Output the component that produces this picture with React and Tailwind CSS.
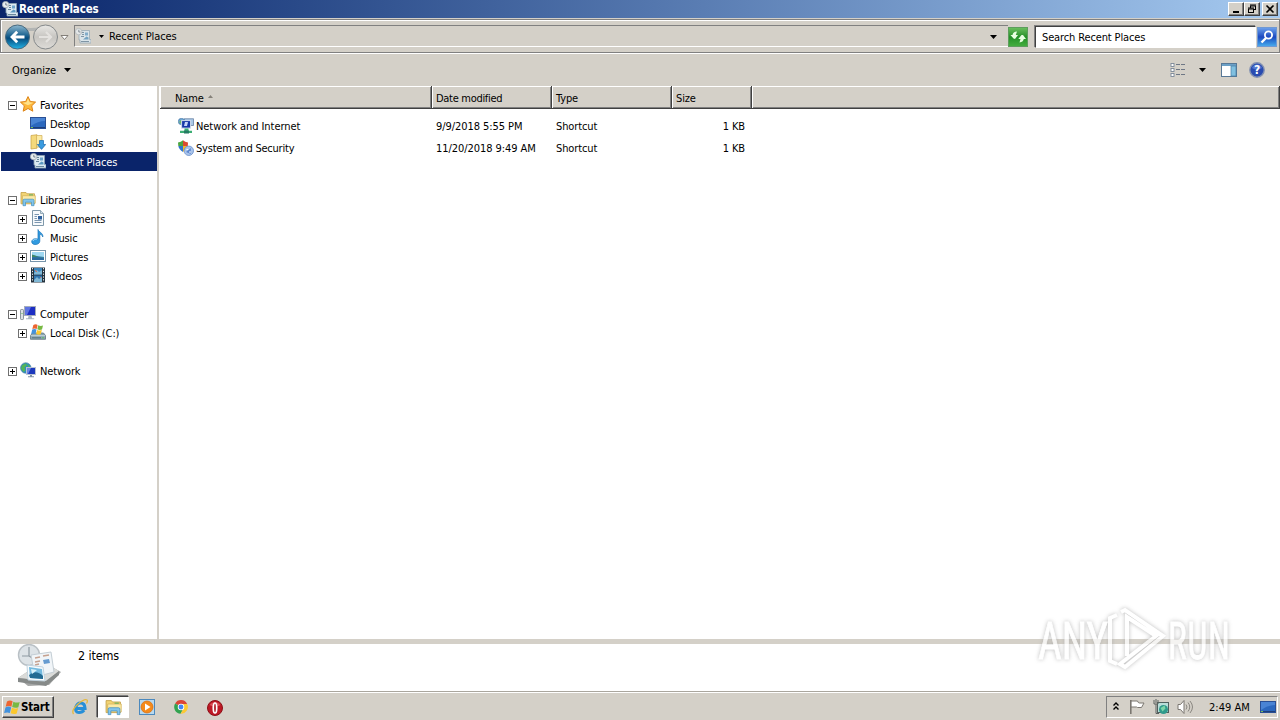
import React from 'react';

const Svg = ({ size = 16, className = '', children, box = '0 0 16 16' }) => (
    <svg width={size} height={size} viewBox={box} className={`shrink-0 ${className}`}>{children}</svg>
);

const RecentIcon = ({ size = 16, className }) => (
    <Svg size={size} className={className}>
        <path d="M4 2.5h10.5v9H16v3.500H5v-3H4z" fill="#dce9f2" stroke="#8da2b1" strokeWidth=".8" />
        <path d="M7 4.500h2M7 6.500h2M6 8.500h3M6 13.500h8" stroke="#6a879d" />
        <rect x="10" y="4.500" width="3" height="3" fill="#6ea5cb" />
        <path d="M8 11.500h5.500v-2l-2-1z" fill="#5c98c0" />
        <circle cx="3.600" cy="3.600" r="3.200" fill="#e8edf0" stroke="#a9b2b8" strokeWidth=".8" />
        <path d="M3.800 1.800v2.200h1.700" fill="none" stroke="#5b6b78" strokeWidth=".8" />
    </Svg>
);

const StarIcon = () => (
    <Svg>
        <path d="M8 .6l2.3 4.9 5.3.6-3.9 3.7 1.1 5.4L8 12.5l-4.8 2.7 1.1-5.4L.4 6.1l5.3-.6z" fill="#fdb73a" stroke="#dd8418" />
        <path d="M8 2.5l1.6 3.8 3.8.5-5.4 2.4-5.4-2.4 3.9-.5z" fill="#ffe28b" />
    </Svg>
);

const DesktopIcon = () => (
    <Svg>
        <rect x=".5" y="2.5" width="15" height="11" fill="#2c68be" stroke="#2a4f94" />
        <path d="M1 3h14v3Q8 6 1 11z" fill="#4a84d4" />
        <path d="M1 12.5h14" stroke="#1f3e78" />
        <path d="M1 12.5h2" stroke="#78c159" />
    </Svg>
);

const DownloadsIcon = () => (
    <Svg>
        <path d="M1 1.5l6-.8v13.5L1 15z" fill="#f5d97c" stroke="#c8a141" strokeWidth=".7" />
        <path d="M6.5 1.5h5.5V13H6.5z" fill="#fbeaa4" stroke="#d1ae55" strokeWidth=".7" />
        <path d="M9.5 6.5h4v4h2.2L11.5 15.4 7.3 10.5h2.2z" fill="#399be0" stroke="#1867ad" strokeWidth=".7" />
    </Svg>
);

const FolderIcon = ({ size = 16, className }) => (
    <Svg size={size} className={className}>
        <path d="M1 1.5h5l1 1.3h7.5v10H1z" fill="#f2d474" stroke="#c39f48" strokeWidth=".8" />
        <path d="M2.5 4.7h12.8v7.5H2.5z" fill="#fbeaa6" stroke="#d2b058" strokeWidth=".7" />
        <path d="M9 3.9h4" stroke="#5caf60" />
        <path d="M3 14.7V9.5q0-1.300 1.300-1.300h8.400q1.300 0 1.300 1.300v5.200h-2.500v-3.500h-6v3.500z" fill="#82c5ec" stroke="#438fc0" strokeWidth=".7" />
    </Svg>
);

const DocumentIcon = () => (
    <Svg>
        <path d="M2.5.5h8l3 3v12h-11z" fill="#f7fafc" stroke="#8099aa" />
        <path d="M10.5.5v3h3" fill="#d5e2eb" stroke="#8099aa" strokeWidth=".8" />
        <path d="M4.5 4.5H9M4.5 6.5H7M4.5 8.5H7M4.5 10.5h7M4.5 12.5h7" stroke="#7b96b0" />
        <rect x="8" y="6" width="4" height="3.5" fill="#2f619e" />
    </Svg>
);

const MusicIcon = () => (
    <Svg>
        <path d="M8 .5c.5 2.7 5.4 3.2 4.8 7.5-.6-2-2-2.7-3-2.7v6.8c0 4.2-7.8 4.6-8.1.8-.2-2.5 3.5-4.2 6.3-2.7z" fill="#319be0" stroke="#1874b9" strokeWidth=".7" />
        <path d="M3 12c.5-1.6 2.3-2 3.7-1.6" stroke="#a8dcfa" fill="none" />
    </Svg>
);

const PictureIcon = () => (
    <Svg>
        <rect x=".5" y="2.5" width="15" height="11" fill="#fff" stroke="#7795ab" />
        <rect x="2" y="4" width="12" height="8" fill="#9fd8f2" />
        <path d="M2 7q4 1 12 2v3H2z" fill="#377f9f" />
        <path d="M2 9.5q5-1 12 1V12H2z" fill="#2a6aa0" />
        <path d="M2 6.5l3 1 3 1.5H2z" fill="#3e8765" />
    </Svg>
);

const VideoIcon = () => (
    <Svg>
        <rect x="1" y=".5" width="14" height="15" fill="#25333f" />
        <rect x="4" y="1" width="8" height="6.5" fill="#3c87be" />
        <rect x="4" y="8.5" width="8" height="6.5" fill="#2f75b0" />
        <path d="M4 6l3-3 2 2 3-2v4.5H4zM4 13l3-3 2 2 3-2v5H4z" fill="#80b8d6" />
        <path d="M5 3l2 2M10 11l1-1" stroke="#d7705d" />
        <path d="M2.5 1v14M13.5 1v14" stroke="#e3eaee" strokeDasharray="1.3 1.5" />
    </Svg>
);

const ComputerIcon = () => (
    <Svg>
        <rect x=".5" y="4.5" width="3" height="10" rx=".7" fill="#dce1e4" stroke="#8a969e" />
        <path d="M1.5 8.5h1" stroke="#5bbb50" />
        <rect x="4.5" y="1.5" width="11" height="9" fill="#1c2ec4" stroke="#a5adbb" />
        <path d="M5 2h6L7 10H5z" fill="#5d73e2" />
        <path d="M8.5 11h3l.7 2.3h2v1H6v-1h2z" fill="#aab6c4" />
    </Svg>
);

const Flag = () => (
    <g>
        <path d="M2.2 2.2Q5 .6 7.3 2.1L6.2 7Q3.8 5.7 1 7z" fill="#ed6531" />
        <path d="M8 2.4q2.8 1.5 5.7.3L12.5 7.4q-2.6 1.2-5.6-.1z" fill="#78b943" />
        <path d="M.8 7.6Q3.6 6.2 6 7.6L4.8 12.7Q2.4 11.5-.4 12.8z" fill="#4292dd" />
        <path d="M6.7 8q2.8 1.4 5.6.2L11 13.2q-2.4 1.1-5.5-.2z" fill="#fbc82d" />
    </g>
);

const DiskIcon = () => (
    <Svg>
        <path d="M2.5 9L.5 11.500v3.800h15v-3.800L13.500 9z" fill="#8ba6b2" stroke="#61747d" strokeWidth=".8" />
        <path d="M.8 11.700h14.400" stroke="#d5e4e8" strokeWidth=".8" />
        <path d="M2 13.8h9" stroke="#57727c" />
        <path d="M12 13.8h2" stroke="#5fc15c" />
        <g transform="translate(1.500 -.8) scale(.84)"><Flag /></g>
    </Svg>
);

const NetworkIcon = () => (
    <Svg>
        <circle cx="5.8" cy="6" r="5.3" fill="#2b8cc3" stroke="#507f9c" strokeWidth=".6" />
        <path d="M2 3.2l4-2 1 2.3-2.5 2 1 3-2 1.5Q2 8 1 6.5zM7 2l3 2-1.2 2z" fill="#53b557" />
        <rect x="6.5" y="5.5" width="9" height="7" fill="#1c39bd" stroke="#bac3d2" />
        <path d="M7 6h4l-3 6H7z" fill="#6a86e4" />
        <path d="M10 13h2v1.2h2v1H8v-1h2z" fill="#8194a5" />
    </Svg>
);

const NetInternetIcon = () => (
    <Svg>
        <rect x="6.5" y=".8" width="9" height="6.7" fill="#a9c8e7" stroke="#6b84a6" strokeWidth=".8" />
        <circle cx="3.5" cy="3.5" r="3.2" fill="#6da7d5" stroke="#4474a1" strokeWidth=".6" />
        <path d="M1 4l2-2 2 1-2 3z" fill="#71ba67" />
        <rect x="3.6" y="2.6" width="9" height="7.5" fill="#1638a8" stroke="#d2ddec" />
        <path d="M7 4h3L9 8H6z" fill="#c5d4f7" />
        <path d="M6.500 10.500h4v2.200H14v2.400H2v-2.400h4.500z" fill="#3bae73" />
        <rect x="6" y="12.500" width="5" height="3" fill="#257b63" />
    </Svg>
);

// quartered shield with a blue disc in front
const SecurityIcon = () => (
    <Svg>
        <path d="M0 2.500Q3 2 5 .3V6H.3z" fill="#4ca742" />
        <path d="M5 .3Q7 2 10 2.500L9.800 6H5z" fill="#db4b30" />
        <path d="M.3 6H5v6Q1 9.500.3 6z" fill="#3175ce" />
        <path d="M5 6h4.800Q9 9.500 5 12z" fill="#f2b929" />
        <circle cx="10.800" cy="10.800" r="4.700" fill="#a9c4eb" stroke="#668dca" strokeWidth=".8" />
        <path d="M8 12l4.800-4v6z" fill="#5d87cf" />
        <path d="M8.400 9.500h2M11 12h2" stroke="#f5f9ff" />
    </Svg>
);

const Caret = ({ className = '' }) => (
    <svg width="7" height="4" viewBox="0 0 7 4" className={`shrink-0 ${className}`}>
        <path d="M0 0h7L3.5 4z" fill="#000" />
    </svg>
);

const tree = [
    { label: 'Favorites', icon: <StarIcon />, box: '-', root: true },
    { label: 'Desktop', icon: <DesktopIcon /> },
    { label: 'Downloads', icon: <DownloadsIcon /> },
    { label: 'Recent Places', icon: <RecentIcon />, active: true },
    null,
    { label: 'Libraries', icon: <FolderIcon />, box: '-', root: true },
    { label: 'Documents', icon: <DocumentIcon />, box: '+' },
    { label: 'Music', icon: <MusicIcon />, box: '+' },
    { label: 'Pictures', icon: <PictureIcon />, box: '+' },
    { label: 'Videos', icon: <VideoIcon />, box: '+' },
    null,
    { label: 'Computer', icon: <ComputerIcon />, box: '-', root: true },
    { label: 'Local Disk (C:)', icon: <DiskIcon />, box: '+' },
    null,
    { label: 'Network', icon: <NetworkIcon />, box: '+', root: true },
];

const files = [
    { name: 'Network and Internet', icon: <NetInternetIcon />, date: '9/9/2018 5:55 PM', type: 'Shortcut', size: '1 KB' },
    { name: 'System and Security', icon: <SecurityIcon />, date: '11/20/2018 9:49 AM', type: 'Shortcut', size: '1 KB' },
];

const Expander = ({ sign }) => (
    <svg width="9" height="9" viewBox="0 0 9 9" className="mt-px shrink-0">
        {sign && <rect x=".5" y=".5" width="8" height="8" fill="#fff" stroke="#707070" />}
        {sign && <path d="M2 4.5h5" stroke="#000" />}
        {sign === '+' && <path d="M4.5 2v5" stroke="#000" />}
    </svg>
);

const TitleBar = () => (
    <div className="flex h-[18px] items-center bg-linear-to-r from-[#0a246a] to-[#a6caf0] pl-[2px] pr-[2px]">
        <RecentIcon />
        <span className="ml-px text-[11.5px] font-bold text-white tracking-[-0.15px]">Recent Places</span>
        <div className="ml-auto flex">
            {['min', 'max', 'close'].map(b => (
                <div key={b} className={`flex h-[14px] w-4 items-center justify-center border border-t-white border-l-white border-r-[#404040] border-b-[#404040] bg-[#d4d0c8] shadow-[inset_-1px_-1px_0_#808080] ${b === 'close' ? 'ml-[2px]' : ''}`}>
                    <svg width="12" height="10" viewBox="0 0 12 10" fill="none" stroke="#000">
                        {b === 'min' && <path d="M3 8h6" strokeWidth="2" />}
                        {b === 'max' && <path d="M4 1h6M4 2h6M4.5 2v2M9.5 2v4M8 5.5h2M2 4h6M2 5h6M2.5 5v4M7.5 5v4M2 8.5h6" />}
                        {b === 'close' && <path d="M2.5 1.5l7 7M9.5 1.5l-7 7" strokeWidth="1.6" />}
                    </svg>
                </div>
            ))}
        </div>
    </div>
);

const NavBar = () => (
    <div className="mt-px flex h-[34px] items-center border border-[#808080] bg-[#d4d0c8] pl-[3px] pr-px shadow-[inset_1px_1px_0_#fff,0_1px_0_#fff]">
        <svg width="66" height="28" viewBox="0 0 66 28" className="shrink-0">
            <defs>
                <linearGradient id="back" x1="0" y1="0" x2="0" y2="1">
                    <stop offset="0" stopColor="#8fb9d0" />
                    <stop offset=".45" stopColor="#19618f" />
                    <stop offset=".55" stopColor="#064b7d" />
                    <stop offset="1" stopColor="#23b4e7" />
                </linearGradient>
                <linearGradient id="fwd" x1="0" y1="0" x2="0" y2="1">
                    <stop offset="0" stopColor="#e9e8e5" />
                    <stop offset=".5" stopColor="#c7c5c1" />
                    <stop offset="1" stopColor="#dedcd8" />
                </linearGradient>
            </defs>
            <path d="M8 4q19 4 37 0v5H8z" fill="#b3b5b4" />
            <circle cx="13.5" cy="15" r="12" fill="url(#back)" stroke="#496a7e" />
            <path d="M8 15h12.5M13.2 9.8L8 15l5.2 5.2" fill="none" stroke="#fff" strokeWidth="2.8" />
            <circle cx="41.5" cy="15" r="12" fill="url(#fwd)" stroke="#85898b" />
            <path d="M35 15h11.5M42 10l5 5-5 5" fill="none" stroke="#e4e2df" strokeWidth="2.2" />
            <path d="M57 13.5h7L60.5 17.5z" fill="#fff" stroke="#77736c" strokeWidth=".9" />
        </svg>
        <div className="ml-1 flex h-[22px] flex-1 items-center border-t border-l border-[#808080] border-b border-b-white">
            <RecentIcon className="opacity-80" />
            <Caret className="ml-[8px] mt-px h-[3px] w-[5px]" />
            <span className="ml-[5px] pt-[2px] tracking-[-0.09px]">Recent Places</span>
            <Caret className="ml-auto mr-[11px] mt-[2px]" />
        </div>
        <div className="mt-px flex h-[20px] w-[20px] items-center justify-center border border-[#5d9d5d] bg-linear-to-b from-[#67bd5c] via-[#249028] to-[#43ad3e]">
            <svg width="18" height="18" viewBox="0 0 18 18" fill="#e9ffe2">
                <path d="M4.5 10.500L1.500 7h2q.5-3.300 4.500-3.500L6.800 7h2.200L6 11zM14 7l3 4h-2.200q-.6 3-4.300 3.500L11.500 11H9.300l3.200-4z" />
            </svg>
        </div>
        <div className="ml-[7px] mt-px flex h-[22px] w-[221px] items-center border border-t-[#404040] border-l-[#404040] border-r-white border-b-white bg-white pl-[6px] pt-[2px] tracking-[-0.13px] shadow-[-1px_-1px_0_#808080]">Search Recent Places</div>
        <div className="ml-[1px] mt-px mr-px flex h-[20px] w-5 items-center justify-center border border-[#7099d3] bg-linear-to-b from-[#6b9eea] via-[#1e48c0] to-[#48a8eb]">
            <svg width="16" height="16" viewBox="0 0 16 16" fill="none" stroke="#fff">
                <circle cx="9.5" cy="6" r="3.6" strokeWidth="1.8" />
                <path d="M7 9l-4.5 4.5" strokeWidth="2.4" />
            </svg>
        </div>
    </div>
);

const ToolBar = () => (
    <div className="flex h-[32px] items-center pl-3 pr-[15px] pt-[2px]">
        <span className="pt-px tracking-[-0.02px]">Organize</span>
        <Caret className="ml-[8px]" />
        <svg width="16" height="14" viewBox="0 0 16 14" className="ml-auto" fill="none">
            {[1.5, 6.5, 11.5].map(y => (
                <g key={y}>
                    <rect x="1" y={y - 1} width="3" height="3" fill="#fff" stroke="#7b8797" strokeWidth=".9" />
                    <path d={`M6 ${y}h4M11 ${y}h4`} stroke="#6e7785" />
                </g>
            ))}
        </svg>
        <Caret className="ml-[13px]" />
        <svg width="16" height="14" viewBox="0 0 16 14" className="ml-[15px]">
            <rect x=".5" y=".5" width="15" height="13" fill="#fff" stroke="#587896" />
            <path d="M1 2h14" stroke="#6ba0c6" strokeWidth="2" />
            <rect x="10" y="3" width="5" height="10" fill="#80c0e0" stroke="#477da4" strokeWidth=".7" />
        </svg>
        <svg width="16" height="16" viewBox="0 0 16 16" className="ml-3">
            <circle cx="8" cy="8" r="7.2" fill="#294bb0" stroke="#8391b2" strokeWidth="1.4" />
            <path d="M3 6a5.3 5.3 0 0 1 10 0q-5 3-10 0z" fill="#5075cf" />
            <text x="8" y="12.4" textAnchor="middle" fill="#fff" className="text-[12px] font-bold">?</text>
        </svg>
    </div>
);

const Sidebar = () => (
    <div className="w-[157px] bg-white pt-[9px]">
        {tree.map((n, i) => n ? (
            <div key={n.label} className={`ml-px flex h-[19px] items-center ${n.root ? 'pl-[7px]' : 'pl-[17px]'} ${n.active ? 'bg-[#0a246a] text-white' : ''}`}>
                <Expander sign={n.box} />
                <div className="ml-[3px] mr-[4px] -mt-px">{n.icon}</div>
                <span className="pt-[2px]">{n.label}</span>
            </div>
        ) : <div key={i} className="h-[19px]" />)}
    </div>
);

const head = 'flex h-full items-center border-r border-[#404040] shadow-[inset_1px_1px_0_#fff,inset_-1px_-1px_0_#808080] pt-[3px]';

const FileList = () => (
    <div className="flex-1 bg-white">
        <div className="flex h-[23px] border-b border-[#404040] bg-[#d4d0c8]">
            <div className={`${head} w-[272px] pl-[15px]`}>
                Name
                <svg width="5" height="3" viewBox="0 0 5 3" className="mb-[4px] ml-[4px]"><path d="M0 3h5L2.5 0z" fill="#858179" /></svg>
            </div>
            <div className={`${head} w-[120px] pl-1 tracking-[-0.3px]`}>Date modified</div>
            <div className={`${head} w-[120px] pl-1`}>Type</div>
            <div className={`${head} w-[80px] pl-1`}>Size</div>
            <div className={`${head} flex-1`} />
        </div>
        <div className="pt-[7px]">
            {files.map(f => (
                <div key={f.name} className="flex h-[22px] items-center">
                    <div className="flex w-[276px] items-center pl-[18px]">
                        <div className="-mt-[3px]">{f.icon}</div>
                        <span className={`ml-[2px] ${f.name.startsWith('Sys') ? 'tracking-[-0.22px]' : 'tracking-[-0.06px]'}`}>{f.name}</span>
                    </div>
                    <div className="w-[120px] tracking-[-0.06px]">{f.date}</div>
                    <div className="w-[120px]">{f.type}</div>
                    <div className="w-[69px] text-right">{f.size}</div>
                </div>
            ))}
        </div>
    </div>
);

const Details = () => (
    <div className="flex h-[48px] border-b border-[#aaa69e] bg-white pl-[17px]">
        <svg width="46" height="44" viewBox="0 0 46 44">
            <path d="M1 34l12-8 22-3 9 5-12 13-21 1z" fill="#a4a6a5" />
            <path d="M1 34l12-8 22-3 7 4-13 10z" fill="#dadbd9" />
            <path d="M1 34l28 3 13-10v4L29 42 1 38z" fill="#868a89" />
            <circle cx="12" cy="11" r="10.5" fill="#dde3e7" stroke="#b9c0c5" strokeWidth="1.4" />
            <path d="M12 3v9H5M12 12l5 3" fill="none" stroke="#8e99a1" strokeWidth="1.2" />
            <path d="M14 11l20-3 3 20-19 5z" fill="#f1f5f8" stroke="#c4ced5" />
            <path d="M18 14l5-1M18 18l5-1M18 21l4-1M26 12l6-1" stroke="#c6a18f" strokeWidth="1.3" />
            <path d="M26 16l6-1 1 4-6 1z" fill="#669bd0" />
            <path d="M10 21l16 2 2 14-17-1z" fill="#f7fbfd" stroke="#c0d2de" />
            <path d="M12 23l13 2 1 10-13-1z" fill="#75badf" />
            <path d="M12 31q7-6 14 1v3l-13-1z" fill="#236b93" />
            <path d="M14 25l6 1-5 4z" fill="#daf2fa" />
        </svg>
        <span className="ml-[15px] mt-[5px] text-[12.5px] tracking-[-0.15px]">2 items</span>
    </div>
);

const TaskBar = () => (
    <div className="flex flex-1 items-center border-t border-white bg-[#d4d0c8] pl-[2px] pr-[2px]">
        <div className="mt-px flex h-[22px] w-[52px] items-center border border-t-white border-l-white border-r-[#404040] border-b-[#404040] pl-[1px] shadow-[inset_-1px_-1px_0_#808080]">
            <svg width="16" height="16" viewBox="-.5 0 14.5 14.5"><Flag /></svg>
            <span className="ml-px text-[11.5px] font-bold tracking-[-0.2px]">Start</span>
        </div>
        <svg width="18" height="18" viewBox="0 0 18 18" className="ml-[17px] mt-px">
            <path d="M4.5 10.5h9.5Q14 5 9.5 5 6 5 4.8 9.5 4 14.500 8 14.500q3.500 0 5-2.300" fill="none" stroke="#278fd8" strokeWidth="3.200" />
            <path d="M2.500 16Q0 12.500 6.500 6.500q7-6 9.500-4.500 1 1-.5 3.500" fill="none" stroke="#e5b83d" strokeWidth="1.300" />
        </svg>
        <div className="mt-px ml-2 flex h-[22px] w-8 items-center justify-center border border-t-[#404040] border-l-[#404040] border-r-white border-b-white bg-white pt-px shadow-[-1px_-1px_0_#808080]">
            <FolderIcon size={17} />
        </div>
        <svg width="16" height="16" viewBox="0 0 16 16" className="ml-[10px]">
            <rect x=".5" y=".5" width="15" height="15" fill="#b8d9ef" stroke="#4c89bd" />
            <circle cx="8" cy="8" r="6" fill="#f58a1a" stroke="#d86a0a" strokeWidth=".7" />
            <path d="M6 4.5l5.5 3.5L6 11.5z" fill="#fff" />
        </svg>
        <svg width="14" height="14" viewBox="0 0 16 16" className="ml-[19px]">
            <path d="M8 8L1.3 4A7.700 7.700 0 0 1 15 4.500H8z" fill="#db4437" />
            <path d="M8 8L1.300 4A7.700 7.700 0 0 0 7.500 15.700L11 9z" fill="#32a350" />
            <path d="M8 4.500h7A7.700 7.700 0 0 1 7.500 15.700L11.500 9z" fill="#fcc934" />
            <circle cx="8" cy="8" r="3.700" fill="#fff" />
            <circle cx="8" cy="8" r="2.800" fill="#4285f4" />
        </svg>
        <svg width="16" height="16" viewBox="0 0 16 16" className="ml-[19px] mt-[2px]">
            <circle cx="8" cy="8" r="7.500" fill="#bd1825" stroke="#8d1017" />
            <path d="M2.500 5a6.500 6 0 0 1 11 0q-5 3-11 0z" fill="#da5258" />
            <ellipse cx="8" cy="8" rx="1.700" ry="5" fill="#a8121c" stroke="#fff" strokeWidth="1.700" />
        </svg>
        <div className="ml-auto mt-px flex h-[22px] w-[172px] items-center border border-t-[#808080] border-l-[#808080] border-r-white border-b-white pl-[6px]">
            <svg width="6" height="9" viewBox="0 0 6 9" fill="none" stroke="#000" strokeWidth="1.4" className="-mt-[2px]">
                <path d="M.5 3.5L3 1l2.5 2.5M.5 7.500L3 5l2.500 2.500" />
            </svg>
            <svg width="16" height="16" viewBox="0 0 16 16" className="ml-[10px]">
                <path d="M2 2h6.500q.5 2 2 2H15l-2.500 4.500H8.500L7.500 8H2" fill="#fff" stroke="#7b7771" />
                <path d="M1.800 1v14" stroke="#7b7771" strokeWidth="1.600" />
            </svg>
            <svg width="16" height="16" viewBox="0 0 16 16" className="ml-[8px]">
                <rect x="4.500" y="3.500" width="11" height="10" fill="#b9ded9" stroke="#50605f" />
                <path d="M1 1v4h4V1M3 5v9.500h3M3 0v4" fill="none" stroke="#5d6261" />
                <circle cx="10.500" cy="10.500" r="4.500" fill="#2f9a8c" />
                <path d="M7.500 9l4-2.500 1 3-3 3z" fill="#7ed5a7" />
            </svg>
            <svg width="17" height="16" viewBox="0 0 17 16" className="ml-[8px]" fill="none" stroke="#8a8781">
                <path d="M1 5.500h2.500L7 1.500v13l-3.500-4H1z" fill="#fff" stroke="#7b7771" />
                <path d="M9 5.500q2 2.500 0 5M11 3.500q3.500 4.500 0 9M13 2q5 6 0 12" />
            </svg>
            <span className="ml-[15px] pt-px tracking-[0.02px]">2:49 AM</span>
            <div className="ml-auto mr-px"><DesktopIcon /></div>
        </div>
    </div>
);

const Watermark = () => (
    <svg width="240" height="90" viewBox="0 0 240 90" className="absolute left-[1030px] top-[596px] overflow-visible opacity-75 [filter:drop-shadow(0_0_2px_#a8a8a8)]">
        <g fill="#fff" stroke="#fff" strokeWidth=".8" className="font-['Roboto'] text-[52px] tracking-normal">
            <text transform="translate(8 63) scale(.79 1)">ANY</text>
            <text transform="translate(138 63) scale(.68 1)" className="tracking-[1px]">RUN</text>
        </g>
        <path d="M87 19l-7 3v43l7 3M91 16l4-2 38 26-38 31-5-3 36-28L97 21v39" fill="none" stroke="#fff" strokeWidth="4" />
    </svg>
);

const App = () => (
    <div className="relative flex h-[720px] w-[1280px] flex-col overflow-hidden bg-[#d4d0c8] font-['DejaVu_Sans_Condensed','DejaVu_Sans',sans-serif] text-[11px] leading-[14px] tracking-[-0.12px] whitespace-nowrap text-black [font-stretch:condensed]">
        <TitleBar />
        <NavBar />
        <ToolBar />
        <div className="mt-px flex h-[553px]">
            <Sidebar />
            <div className="w-[3px] border-r border-white bg-[#d4d0c8]" />
            <FileList />
        </div>
        <div className="h-[5px] bg-[#d4d0c8]" />
        <Details />
        <TaskBar />
        <Watermark />
    </div>
);

export default App;
